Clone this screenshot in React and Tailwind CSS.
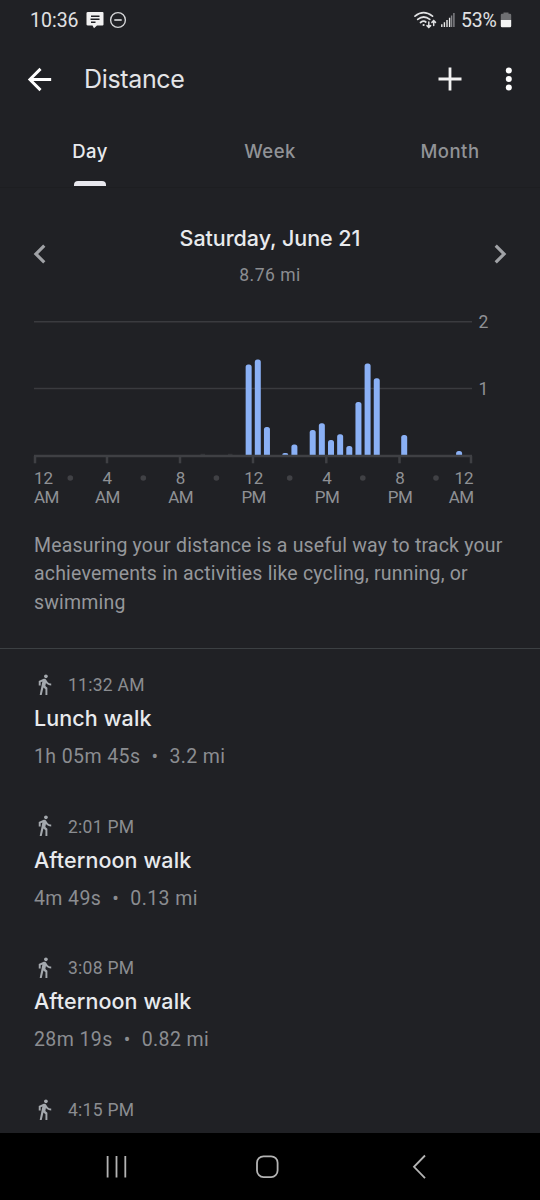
import { MdArrowBack, MdChevronLeft, MdChevronRight, MdDirectionsWalk } from 'react-icons/md';

const tabs = [
  { label: 'Day', active: true },
  { label: 'Week', active: false },
  { label: 'Month', active: false },
];

// slot = half hour of the day, top = y of the bar's top edge
const bars = [
  { slot: 23, top: 364.5 },
  { slot: 24, top: 359.5 },
  { slot: 25, top: 427 },
  { slot: 27, top: 453 },
  { slot: 28, top: 444.5 },
  { slot: 30, top: 430 },
  { slot: 31, top: 423.3 },
  { slot: 32, top: 440 },
  { slot: 33, top: 434.3 },
  { slot: 34, top: 446 },
  { slot: 35, top: 402 },
  { slot: 36, top: 363.5 },
  { slot: 37, top: 378.3 },
  { slot: 40, top: 435 },
  { slot: 46, top: 451 },
];

const hours = [
  { x: 34, tick: 35, hour: '12', period: 'AM', anchor: 'start' },
  { x: 107.3, tick: 107, hour: '4', period: 'AM', anchor: 'middle' },
  { x: 180.6, tick: 180, hour: '8', period: 'AM', anchor: 'middle' },
  { x: 253.7, tick: 253, hour: '12', period: 'PM', anchor: 'middle' },
  { x: 327, tick: 326.3, hour: '4', period: 'PM', anchor: 'middle' },
  { x: 400, tick: 399.5, hour: '8', period: 'PM', anchor: 'middle' },
  { x: 473.5, tick: 471, hour: '12', period: 'AM', anchor: 'end' },
];

const dots = [70.3, 143.3, 216.4, 289.7, 362.8, 436];

const walks = [
  { time: '11:32 AM', name: 'Lunch walk', duration: '1h 05m 45s', distance: '3.2 mi' },
  { time: '2:01 PM', name: 'Afternoon walk', duration: '4m 49s', distance: '0.13 mi' },
  { time: '3:08 PM', name: 'Afternoon walk', duration: '28m 19s', distance: '0.82 mi' },
  { time: '4:15 PM' },
];

export default function App() {
  return (
    <div className="flex h-[1200px] w-[540px] flex-col overflow-hidden bg-[#202125] font-['Roboto',sans-serif] text-[#e8eaed]">
      <StatusBar />
      <Header />
      <Tabs />
      <DateNav />
      <DistanceChart />
      <p className="h-[119px] shrink-0 border-b-[1.5px] border-[#3c4043] pt-[1.5px] pl-[34px] text-[19.5px] leading-[28.5px] tracking-[0.19px] whitespace-nowrap text-[#95979b]">
        Measuring your distance is a useful way to track your
        <br />
        achievements in activities like cycling, running, or
        <br />
        swimming
      </p>
      <div className="min-h-0 flex-1 overflow-hidden pt-[22px]">
        {walks.map((walk) => (
          <WalkItem key={walk.time} {...walk} />
        ))}
      </div>
      <NavigationBar />
    </div>
  );
}

function StatusBar() {
  return (
    <div className="flex h-10 shrink-0 items-center pr-7 pl-[30px]">
      <span className="w-[49px] pt-px text-[19.5px] text-[#e0e1e3]">10:36</span>
      <svg className="ml-[7px]" width="18" height="18" viewBox="0 0 18 18">
        <path d="M2 1h14.5q1 0 1 1v11.5q0 1-1 1H11L8 17.2 6.5 14.5H2q-1.500 0-1.500-1V2q0-1 1.500-1z" fill="#f1f1f1" />
        <path d="M5 5.200h8.500M4.500 8.200h9M5 11.200h4.500" stroke="#202125" strokeWidth="1.500" />
      </svg>
      <svg className="ml-[5px]" width="18" height="18" viewBox="0 0 18 18" fill="none" stroke="#d4d5d7">
        <circle cx="9" cy="9" r="7.400" strokeWidth="1.400" />
        <path d="M5.300 9h7.400" strokeWidth="1.700" />
      </svg>
      <svg className="ml-auto" width="24" height="18" viewBox="0 0 24 18" fill="none" stroke="#e0e1e3" strokeWidth="1.700" strokeLinecap="round">
        <path d="M2 5.200Q10.500-1.800 19.500 5.200" />
        <path d="M4.700 8.400Q10.700 3.600 16.800 8.400" />
        <path d="M7.500 11.500Q10.700 9.200 12.800 11" />
        <circle cx="10.600" cy="14" r="1.100" fill="#e0e1e3" stroke="none" />
        <path d="M15.800 11v5M14 14.600l1.800 1.800 1.800-1.800M20.700 14.500v-4.500M18.900 11.400l1.800-1.800 1.800 1.800" strokeWidth="1.500" />
      </svg>
      <svg className="ml-[3px]" width="16" height="16" viewBox="0 0 16 16">
        <path d="M1.800 15v-2.800M4.400 15v-4.800M7 15V8M9.600 15V5.800" stroke="#e8e8e8" strokeWidth="1.400" />
        <path d="M11.600 15V3.500M13.900 15V1" stroke="#85868a" strokeWidth="1.400" />
      </svg>
      <span className="mr-[2px] ml-[5px] w-[37px] pt-px text-[19.5px] tracking-[-0.2px] text-[#e0e1e3]">53%</span>
      <svg className="mb-px" width="12" height="17" viewBox="0 0 12 17">
        <path d="M3.500 1.500h5v1.300H10q1.200 0 1.200 1.200v5H.8V4q0-1.200 1.200-1.200h1.500z" fill="#6f7073" />
        <path d="M.8 9h10.400V15q0 1.200-1.200 1.200H2Q.8 16.200.8 15z" fill="#f5f5f5" />
      </svg>
    </div>
  );
}

function Header() {
  return (
    <header className="flex h-[78px] shrink-0 items-center pr-[21px] pl-[22px]">
      <MdArrowBack className="size-[35px] text-white" />
      <h1 className="ml-[27px] pt-[2px] font-['Inter'] text-[25px] tracking-[-0.35px] text-[#e3e4e7]">Distance</h1>
      <svg className="ml-auto" width="26" height="26" viewBox="0 0 26 26">
        <path d="M13 1.500v23M1.500 13h23" stroke="#f1f1f1" strokeWidth="2.800" />
      </svg>
      <svg className="ml-[40px]" width="16" height="26" viewBox="0 0 16 26" fill="#fff">
        <circle cx="5.800" cy="4.600" r="3" />
        <circle cx="5.800" cy="13" r="3" />
        <circle cx="5.800" cy="21.400" r="3" />
      </svg>
    </header>
  );
}

function Tabs() {
  return (
    <nav className="flex h-[70px] shrink-0 border-b border-[#1d1e21]">
      {tabs.map(({ label, active }) => (
        <div key={label} className="flex w-[180px] flex-col items-center justify-between pt-[19px] pb-px">
          <span className={`font-['Inter'] text-[18.5px] leading-7 font-medium tracking-[0.5px] ${active ? 'text-[#e8eaed]' : 'text-[#919397]'}`}>
            {label}
          </span>
          {active && <span className="h-[5px] w-8 rounded-t-[4px] bg-[#e8e8ee]" />}
        </div>
      ))}
    </nav>
  );
}

function DateNav() {
  return (
    <div className="flex h-[112px] shrink-0 items-center justify-between px-[21px] pt-5">
      <MdChevronLeft className="size-[38px] text-[#a0a2a6]" />
      <div className="pt-px text-center">
        <h2 className="font-['Inter'] text-[21.5px] leading-[30px] font-medium tracking-[-0.05px] text-[#e8eaed]">Saturday, June 21</h2>
        <p className="mt-[10px] text-[17.5px] leading-6 tracking-[0.5px] text-[#8b8d91]">8.76 mi</p>
      </div>
      <MdChevronRight className="size-[38px] text-[#a0a2a6]" />
    </div>
  );
}

function DistanceChart() {
  return (
    <svg className="shrink-0" width="540" height="230" viewBox="0 300 540 230">
      <path d="M34 321.700H472M34 388.600H472" stroke="#3a3b3f" strokeWidth="1.500" />
      <g fill="#8f9195" fontSize="17.500">
        <text x="478.500" y="328">2</text>
        <text x="478.500" y="395">1</text>
      </g>
      {bars.map(({ slot, top }) => {
        const x = 35.2 + slot * 9.15;
        const r = Math.min(2.5, 455 - top);
        return (
          <path
            key={slot}
            d={`M${x} 455V${top + r}q0-${r} ${r}-${r}h${6 - 2 * r}q${r} 0 ${r} ${r}V455z`}
            fill="#8ab0f5"
          />
        );
      })}
      <path d="M200.500 454.500h4.500M228 454.500h4.500" stroke="#313236" strokeWidth="1.500" />
      <path d="M34 456H472" stroke="#3f4044" strokeWidth="2.600" />
      {hours.map(({ x, tick, hour, period, anchor }) => (
        <g key={tick} fill="#8f9195" fontSize="17" textAnchor={anchor}>
          <path d={`M${tick} 456v7.300`} stroke="#3f4044" strokeWidth="2.500" />
          <text x={x} y="484">{hour}</text>
          <text x={x} y="503.300" letterSpacing="-0.600">{period}</text>
        </g>
      ))}
      {dots.map((cx) => (
        <circle key={cx} cx={cx} cy="478" r="2.800" fill="#404145" />
      ))}
    </svg>
  );
}

function WalkItem({ time, name, duration, distance }) {
  return (
    <article className="h-[141.7px] pl-[34px]">
      <div className="flex h-7 items-center">
        <MdDirectionsWalk className="mb-[2px] -ml-px size-[23px] text-[#a4a9ae]" />
        <span className="ml-[12px] text-[17.5px] tracking-[0.27px] text-[#8b8d91]">{time}</span>
      </div>
      {name && (
        <>
          <h3 className="mt-1 font-['Inter'] text-[21.5px] leading-[30px] font-medium tracking-[0.1px] text-[#e8eaed]">{name}</h3>
          <p className="mt-[9px] flex text-[19.5px] leading-[30px] tracking-[0.4px] text-[#8b8d91]">
            {duration}
            <span className="w-[29px] text-center">•</span>
            {distance}
          </p>
        </>
      )}
    </article>
  );
}

function NavigationBar() {
  return (
    <div className="h-[67px] shrink-0 bg-black">
      <svg width="540" height="67" viewBox="0 1133 540 67" fill="none" stroke="#b4b4b4" strokeWidth="1.800">
        <path d="M107.600 1156v21.500M116.500 1156v21.500M125.300 1156v21.500" />
        <rect x="257" y="1156.300" width="20.600" height="20.800" rx="6.500" />
        <path d="M425 1155.500l-11 11.300 11 11.300" />
      </svg>
    </div>
  );
}
